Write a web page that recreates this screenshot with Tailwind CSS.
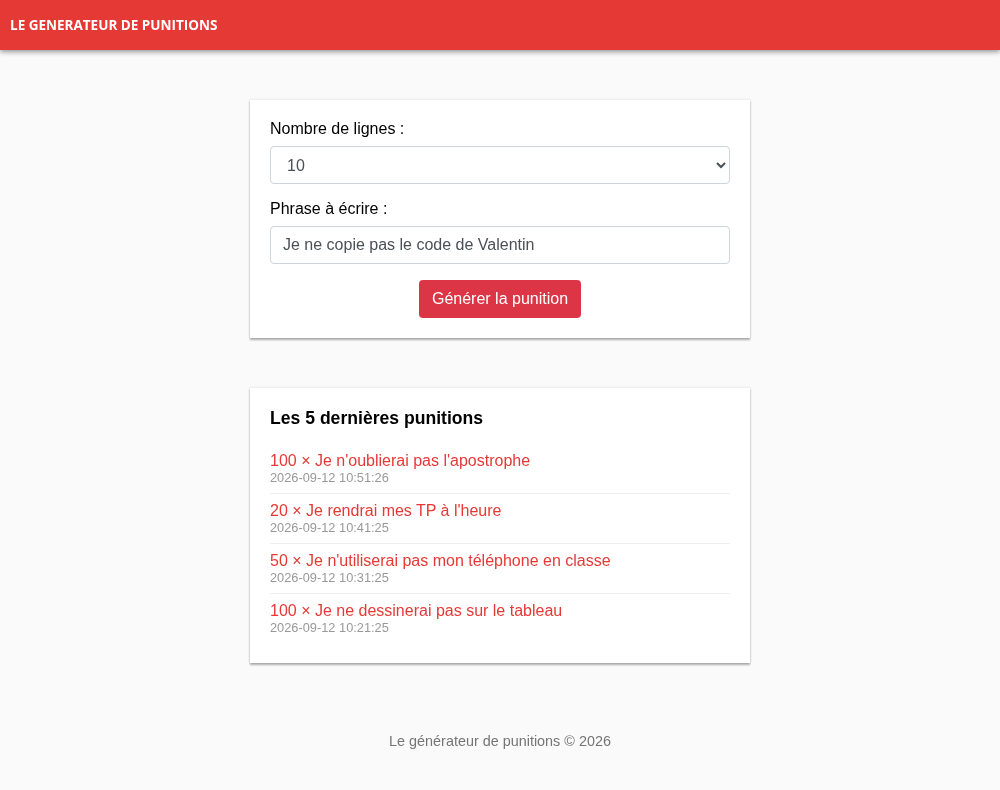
<!DOCTYPE html>
<html lang="fr">

<head>
  <meta charset="UTF-8">
  <meta name="viewport" content="width=device-width, initial-scale=1.0">
  <title>Le générateur de punitions</title>
  <script src="https://cdn.jsdelivr.net/npm/@tailwindcss/browser@4"></script>
</head>

<body class="min-h-screen bg-[#fafafa] font-['Liberation_Sans',Arial,sans-serif] text-black">

  <header class="h-[50px] bg-[#e53935] flex items-center px-[10px] shadow-[0_2px_5px_rgba(0,0,0,0.4)]">
    <span class="pt-[2px] text-white text-[13.5px] font-bold uppercase leading-none font-['Open_Sans',sans-serif] will-change-transform">Le generateur de punitions</span>
  </header>

  <main class="w-[500px] mx-auto pt-[50px] will-change-transform">
    <form class="bg-white p-5 shadow-[0_2px_2px_rgba(0,0,0,0.3),0_0_3px_rgba(0,0,0,0.12)]">
      <label class="block mb-2 text-base leading-[18px]">Nombre de lignes :</label>
      <select class="block w-full h-[38px] px-3 mb-4 text-base text-[#495057] bg-white border border-[#ced4da] rounded">
        <option>10</option>
        <option>20</option>
        <option>50</option>
        <option>100</option>
      </select>
      <label class="block mb-2 text-base leading-[18px]">Phrase à écrire :</label>
      <input type="text" value="Je ne copie pas le code de Valentin" class="block w-full h-[38px] px-3 mb-4 text-base text-[#495057] bg-white border border-[#ced4da] rounded">
      <div class="flex justify-center">
        <button type="button" class="h-[38px] px-[13px] text-base text-white bg-[#dc3545] rounded">Générer la punition</button>
      </div>
    </form>

    <section class="bg-white p-5 mt-[50px] shadow-[0_2px_2px_rgba(0,0,0,0.3),0_0_3px_rgba(0,0,0,0.12)]">
      <h2 class="text-[17.6px] font-bold leading-[21px] mb-[15px]">Les 5 dernières punitions</h2>
      <ul>
        <li class="h-[50px] pt-2 border-b border-[#eeeeee]">
          <a href="#" class="block text-base leading-[18px] text-[#e53935]">100 × Je n'oublierai pas l'apostrophe</a>
          <p class="text-[12.8px] leading-[15px] text-[#999999]">2026-09-12 10:51:26</p>
        </li>
        <li class="h-[50px] pt-2 border-b border-[#eeeeee]">
          <a href="#" class="block text-base leading-[18px] text-[#e53935]">20 × Je rendrai mes TP à l'heure</a>
          <p class="text-[12.8px] leading-[15px] text-[#999999]">2026-09-12 10:41:25</p>
        </li>
        <li class="h-[50px] pt-2 border-b border-[#eeeeee]">
          <a href="#" class="block text-base leading-[18px] text-[#e53935]">50 × Je n'utiliserai pas mon téléphone en classe</a>
          <p class="text-[12.8px] leading-[15px] text-[#999999]">2026-09-12 10:31:25</p>
        </li>
        <li class="h-[49px] pt-2">
          <a href="#" class="block text-base leading-[18px] text-[#e53935]">100 × Je ne dessinerai pas sur le tableau</a>
          <p class="text-[12.8px] leading-[15px] text-[#999999]">2026-09-12 10:21:25</p>
        </li>
      </ul>
    </section>
  </main>

  <footer class="pt-[70px] text-center text-[14.4px] leading-[16px] text-[#757575] will-change-transform">Le générateur de punitions © 2026</footer>

</body>

</html>
